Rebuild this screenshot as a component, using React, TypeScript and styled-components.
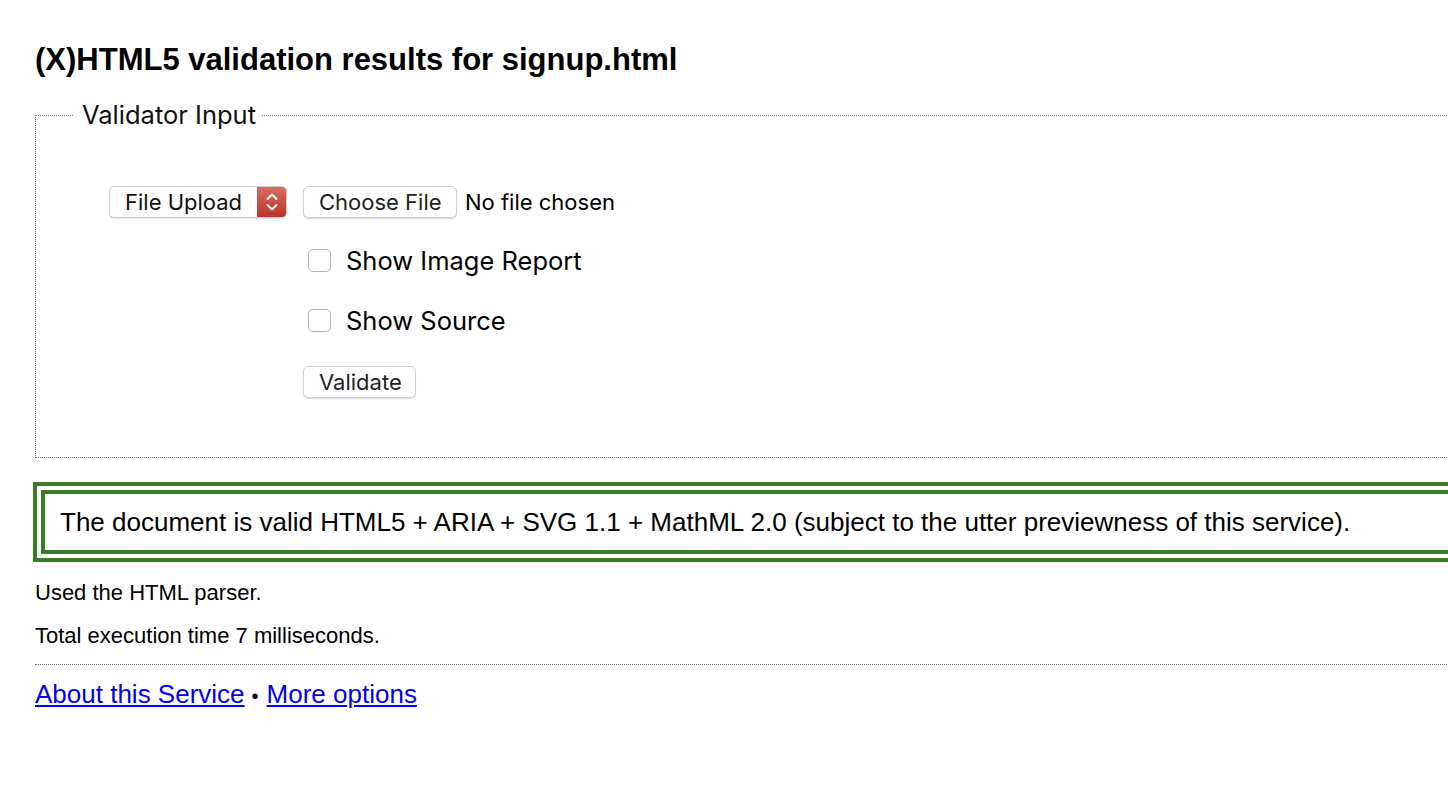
import React from 'react'
import styled, { createGlobalStyle } from 'styled-components'

const GlobalStyle = createGlobalStyle`
  html, body {
    margin: 0;
    padding: 0;
    overflow: hidden;
    background: #fff;
  }
  body {
    font-family: "Liberation Sans", Arial, Helvetica, sans-serif;
    color: #000;
  }
`

const Page = styled.div`
  width: 1500px;
  padding: 0 0 0 35px;
`

const Title = styled.h2`
  margin: 0;
  padding-top: 42px;
  font-size: 31px;
  line-height: 36px;
  font-weight: bold;
`

const InputSet = styled.fieldset`
  margin: 23px 0 0 0;
  padding: 0;
  border: 1px dotted #777;
  height: 357px;
  box-sizing: border-box;
  font-family: Inter, "Noto Sans", sans-serif;
`

const Legend = styled.legend`
  margin-left: 38px;
  padding: 0 6px 0 8px;
  font-size: 25.5px;
  line-height: 28px;
  color: #111;
`

const Grid = styled.div`
  display: grid;
  grid-template-columns: 194px auto;
  justify-content: start;
  padding: 56px 0 0 73px;
`

const Cell = styled.div<{ $h: number; $top?: number }>`
  display: flex;
  align-items: center;
  height: ${p => p.$h}px;
  padding-top: ${p => p.$top ?? 0}px;
`

const Select = styled.div`
  display: flex;
  align-items: stretch;
  width: 178px;
  height: 32px;
  box-sizing: border-box;
  border: 1px solid #cfcfcf;
  border-radius: 5px;
  background: #fff;
  box-shadow: 0 1px 1px rgba(0, 0, 0, 0.12);
  overflow: hidden;
`

const SelectText = styled.span`
  flex: 1;
  display: flex;
  align-items: center;
  padding-left: 15px;
  font-size: 22px;
  color: #111;
`

const Stepper = styled.span`
  width: 29px;
  display: flex;
  align-items: center;
  justify-content: center;
  background: linear-gradient(#d3705f, #b8342a);
`

const Button = styled.button<{ $w: number }>`
  width: ${p => p.$w}px;
  height: 32px;
  padding: 0 0 0 15px;
  text-align: left;
  border: 1px solid #cfcfcf;
  border-radius: 5px;
  background: #fff;
  box-shadow: 0 1px 1px rgba(0, 0, 0, 0.14);
  font-family: Inter, "Noto Sans", sans-serif;
  font-size: 22px;
  color: #222;
`

const FileName = styled.span`
  margin-left: 8px;
  font-size: 22px;
  color: #000;
`

const Check = styled.span`
  display: inline-block;
  width: 23px;
  height: 23px;
  box-sizing: border-box;
  margin-left: 5px;
  border: 1px solid #b5b5b5;
  border-radius: 5px;
  background: #fff;
`

const CheckLabel = styled.span`
  margin-left: 15px;
  font-size: 25.5px;
  color: #000;
`

const ValidBox = styled.div`
  margin: 24px 0 0 -2px;
  border: 12px double #3a7d24;
  padding: 0 0 0 15px;
  height: 56px;
  display: flex;
  align-items: center;
  font-size: 26px;
`

const Note = styled.p`
  margin: 0;
  font-size: 22px;
  line-height: 24px;
  padding-top: 19px;
`

const Rule = styled.div`
  margin-top: 16px;
  border-top: 1px dotted #777;
`

const Links = styled.div`
  padding-top: 14px;
  font-size: 26px;
  line-height: 30px;
`

const Link = styled.a`
  color: #0000ee;
  text-decoration: underline;
`

const Bullet = styled.span`
  font-size: 20px;
  margin: 0 8px 0 7px;
`

const Chevrons = () => (
  <svg width="16" height="26" viewBox="0 0 16 26" fill="none" stroke="#fff" strokeWidth="1.8" strokeLinecap="round" strokeLinejoin="round">
    <path d="M3.5 10 L8 5.5 L12.5 10" />
    <path d="M3.5 16 L8 20.5 L12.5 16" />
  </svg>
)

export default function App() {
  return (
    <Page>
      <GlobalStyle />
      <Title>(X)HTML5 validation results for signup.html</Title>
      <InputSet>
        <Legend>Validator Input</Legend>
        <Grid>
          <Cell $h={34}>
            <Select>
              <SelectText>File Upload</SelectText>
              <Stepper><Chevrons /></Stepper>
            </Select>
          </Cell>
          <Cell $h={34}>
            <Button $w={154}>Choose File</Button>
            <FileName>No file chosen</FileName>
          </Cell>
          <div />
          <Cell $h={60} $top={11}>
            <Check />
            <CheckLabel>Show Image Report</CheckLabel>
          </Cell>
          <div />
          <Cell $h={60}>
            <Check />
            <CheckLabel>Show Source</CheckLabel>
          </Cell>
          <div />
          <Cell $h={60} $top={2}>
            <Button $w={113}>Validate</Button>
          </Cell>
        </Grid>
      </InputSet>
      <ValidBox>
        The document is valid HTML5 + ARIA + SVG 1.1 + MathML 2.0 (subject to the utter previewness of this service).
      </ValidBox>
      <Note>Used the HTML parser.</Note>
      <Note>Total execution time 7 milliseconds.</Note>
      <Rule />
      <Links>
        <Link href="#">About this Service</Link><Bullet>•</Bullet><Link href="#">More options</Link>
      </Links>
    </Page>
  )
}
